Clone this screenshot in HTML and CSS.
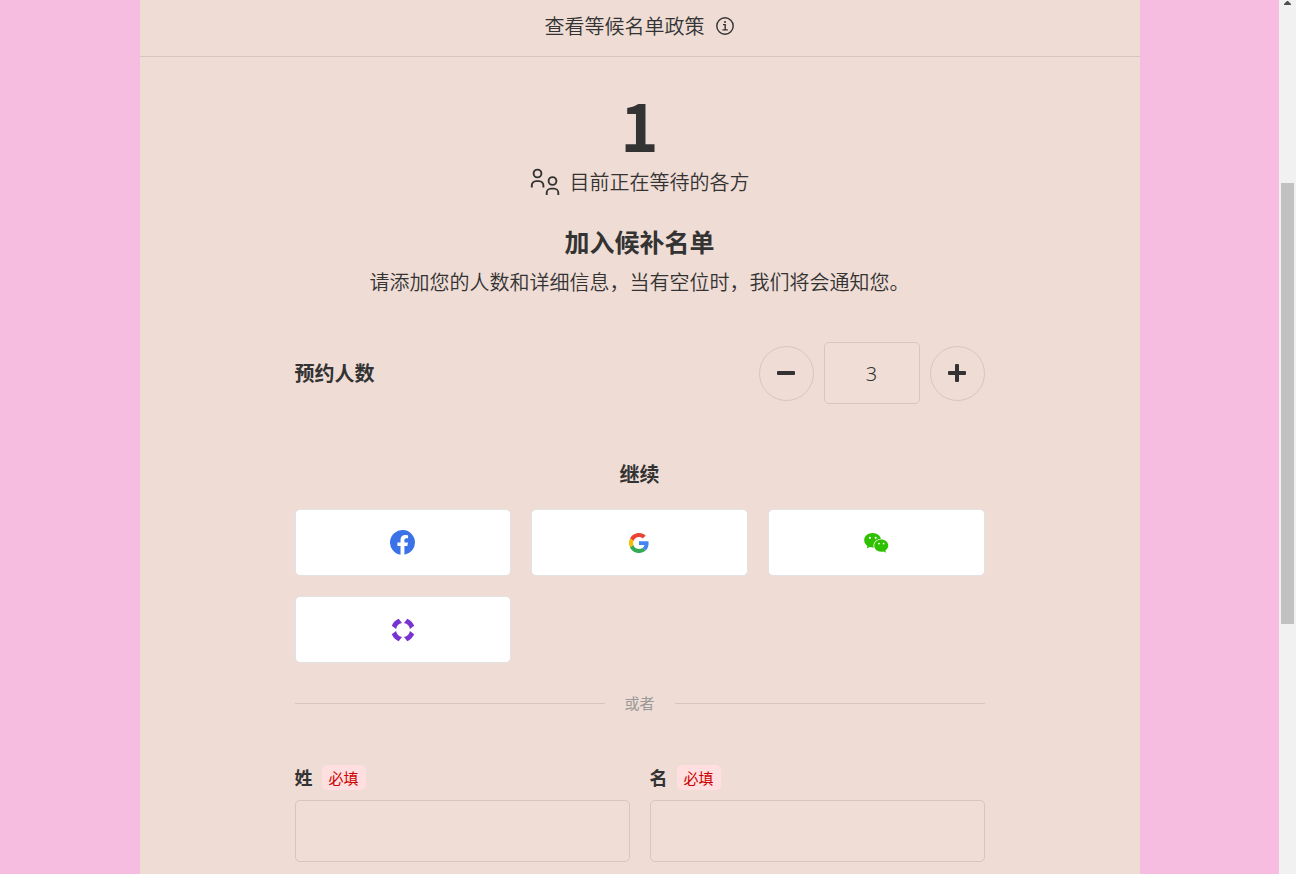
FILE: index.html
```html
<!DOCTYPE html>
<html lang="zh-CN">
<head>
  <meta charset="UTF-8" />
  <meta name="viewport" content="width=device-width, initial-scale=1.0" />
  <title>加入候补名单</title>
  <link rel="stylesheet" href="styles.css">
</head>
<body>

  <main class="page">
    <div class="card">

      <button type="button" class="policy">
        查看等候名单政策
        <svg width="20" height="20" viewBox="0 0 20 20" fill="none" stroke="currentColor" stroke-width="1.4" aria-hidden="true">
          <circle cx="10" cy="10" r="8.2" />
          <path d="M8 8.6h2.2v5.2M7.4 13.9h5.4" />
          <circle cx="10" cy="5.9" r="1" fill="currentColor" stroke="none" />
        </svg>
      </button>

      <div class="content">
        <div class="count">1</div>
        <p class="waiting">
          <svg width="30" height="28" viewBox="0 0 30 28" fill="none" stroke="currentColor" stroke-width="1.9" aria-hidden="true">
            <circle cx="7.5" cy="5.5" r="3.9" />
            <path d="M1.8 19.5v-2.2a4.2 4.2 0 0 1 4.2-4.2h3.2a4.2 4.2 0 0 1 4.2 4.2v2.2" />
            <circle cx="22.5" cy="13" r="3.9" />
            <path d="M16.7 27v-2.2a4.2 4.2 0 0 1 4.2-4.2h3.2a4.2 4.2 0 0 1 4.2 4.2V27" />
          </svg>
          目前正在等待的各方
        </p>

        <h1>加入候补名单</h1>
        <p class="intro">请添加您的人数和详细信息，当有空位时，我们将会通知您。</p>

        <form>
          <div class="party">
            <label for="partySize">预约人数</label>
            <div class="stepper">
              <button type="button" class="round" aria-label="减少">
                <svg width="20" height="20" viewBox="0 0 20 20" aria-hidden="true">
                  <rect x="1" y="8" width="18" height="4" rx="1" fill="currentColor" />
                </svg>
              </button>
              <input type="text" id="partySize" class="size" value="3" inputmode="numeric">
              <button type="button" class="round" aria-label="增加">
                <svg width="20" height="20" viewBox="0 0 20 20" aria-hidden="true">
                  <path d="M2 8h6V2q0-1 1-1h2q1 0 1 1v6h6q1 0 1 1v2q0 1-1 1h-6v6q0 1-1 1H9q-1 0-1-1v-6H2q-1 0-1-1V9q0-1 1-1z" fill="currentColor" />
                </svg>
              </button>
            </div>
          </div>

          <h2>继续</h2>
          <div class="logins">
            <button type="button" aria-label="Facebook">
              <svg width="25" height="25" viewBox="0 0 24 24" aria-hidden="true">
                <path fill="#3b72e8" d="M24 12a12 12 0 1 0-13.9 11.85v-8.4H7.1V12h3V9.4c0-3 1.8-4.7 4.55-4.7 1.3 0 2.7.25 2.7.25v2.9h-1.5c-1.5 0-2 .95-2 1.9V12h3.4l-.55 3.45h-2.85v8.4A12 12 0 0 0 24 12z" />
              </svg>
            </button>
            <button type="button" aria-label="Google">
              <svg width="20" height="20" viewBox="0 0 48 48" aria-hidden="true">
                <path fill="#ea4335" d="M24 9.5c3.54 0 6.71 1.22 9.21 3.6l6.85-6.85C35.9 2.38 30.47 0 24 0 14.62 0 6.51 5.38 2.56 13.22l7.98 6.19C12.43 13.72 17.74 9.5 24 9.5z" />
                <path fill="#4285f4" d="M46.98 24.55c0-1.57-.15-3.09-.38-4.55H24v9.02h12.94c-.58 2.96-2.26 5.48-4.78 7.18l7.73 6c4.51-4.18 7.09-10.36 7.09-17.65z" />
                <path fill="#fbbc05" d="M10.53 28.59a14.5 14.5 0 0 1 0-9.18l-7.98-6.19a24 24 0 0 0 0 21.56l7.98-6.19z" />
                <path fill="#34a853" d="M24 48c6.48 0 11.93-2.13 15.89-5.81l-7.73-6c-2.15 1.45-4.92 2.3-8.16 2.3-6.26 0-11.57-4.22-13.47-9.91l-7.98 6.19C6.51 42.62 14.62 48 24 48z" />
              </svg>
            </button>
            <button type="button" aria-label="微信">
              <svg width="25" height="20" viewBox="0 0 25 20" aria-hidden="true">
                <path fill="#2dc100" d="M8.6 0C3.9 0 .2 3.1.2 7.2c0 2.4 1.2 4.3 3.3 5.8l-.8 2.6 3-1.5c1 .2 2 .4 2.9.4C13.3 14.5 17 11.3 17 7.2S13.3 0 8.6 0z" />
                <ellipse cx="17.3" cy="12.6" rx="7.9" ry="6.9" fill="#fff" />
                <path fill="#2dc100" d="M17.3 6.4c-4 0-7.1 2.7-7.1 6.2s3.1 6.2 7.1 6.2c.8 0 1.6-.2 2.4-.4l2.3 1.3-.6-2.1c1.7-1.3 2.9-3 2.9-5 0-3.5-3.2-6.2-7-6.2z" />
                <g fill="#fff">
                  <circle cx="5.9" cy="4.8" r="1.1" />
                  <circle cx="11.7" cy="4.8" r="1.1" />
                  <circle cx="15" cy="10.6" r=".9" />
                  <circle cx="19.6" cy="10.6" r=".9" />
                </g>
              </svg>
            </button>
            <button type="button" aria-label="其他账号">
              <svg width="24" height="24" viewBox="0 0 24 24" aria-hidden="true">
                <defs>
                  <path id="segment" d="M16.3.8Q21 2.800 23.200 7.700L18.900 11A7.200 7.200 0 0 0 13 5.100z" />
                </defs>
                <g fill="#7933d1">
                  <use href="#segment" />
                  <use href="#segment" transform="rotate(90 12 12)" />
                  <use href="#segment" transform="rotate(180 12 12)" />
                  <use href="#segment" transform="rotate(270 12 12)" />
                </g>
              </svg>
            </button>
          </div>

          <div class="divider">或者</div>

          <div class="names">
            <div class="field">
              <label for="lastName">姓 <span class="required">必填</span></label>
              <input type="text" id="lastName">
            </div>
            <div class="field">
              <label for="firstName">名 <span class="required">必填</span></label>
              <input type="text" id="firstName">
            </div>
          </div>
        </form>
      </div>
    </div>
  </main>

  <div class="scrollbar" aria-hidden="true">
    <svg width="7" height="4" viewBox="0 0 7 4"><path d="M0 4V3l3-3h1l3 3v1z" fill="#505050" /></svg>
    <div class="thumb"></div>
  </div>

</body>
</html>
```

FILE: styles.css
```css
* {
  box-sizing: border-box;
}

body {
  margin: 0;
  height: 100vh;
  display: flex;
  overflow: hidden;
  background: #f7bde0;
  color: #333;
  font-family: "Noto Sans CJK SC", sans-serif;
  font-size: 20px;
  font-weight: 350;
  line-height: 30px;
}

h1, h2, p {
  margin: 0;
}

button, input {
  font: inherit;
  color: inherit;
}

button {
  display: flex;
  align-items: center;
  justify-content: center;
  padding: 0;
  cursor: pointer;
}

.page {
  flex: 1;
  min-width: 0;
  overflow: hidden;
}

.card {
  max-width: 1000px;
  min-height: 100%;
  margin: 0 auto;
  background: #efdcd5;
}

.policy {
  width: 100%;
  height: 57px;
  gap: 10px;
  padding-bottom: 4px;
  background: none;
  border: 0;
  border-bottom: 1px solid #d9c5bf;
}

.content {
  max-width: 690px;
  margin: 0 auto;
  padding-top: 30px;
  text-align: center;
}

.count {
  margin-bottom: 6px;
  font-size: 65px;
  font-weight: 700;
  line-height: 74px;
}

.waiting {
  display: flex;
  align-items: center;
  justify-content: center;
  gap: 10px;
}

h1 {
  margin-top: 26px;
  font-size: 25px;
  line-height: 36px;
}

.intro {
  margin-top: 8px;
}

.party {
  display: flex;
  align-items: center;
  justify-content: space-between;
  margin-top: 45px;
}

.party label {
  font-weight: 700;
}

.stepper {
  display: flex;
  align-items: center;
  gap: 10px;
}

.round {
  width: 55px;
  height: 55px;
  background: none;
  border: 1px solid #d9c5bf;
  border-radius: 50%;
}

.size, .field input {
  height: 62px;
  background: #efddd6;
  border: 1px solid #d9c5bf;
  border-radius: 5px;
}

.size {
  width: 96px;
  font-family: "Noto Sans", sans-serif;
  font-weight: 300;
  text-align: center;
}

h2 {
  margin-top: 55px;
  font-size: 20px;
  line-height: 30px;
}

.logins {
  display: grid;
  grid-template-columns: repeat(3, 1fr);
  gap: 20px;
  margin-top: 20px;
}

.logins button {
  height: 67px;
  background: #fff;
  border: 1px solid #e2e2e2;
  border-radius: 5px;
}

.divider {
  display: flex;
  align-items: center;
  gap: 20px;
  margin-top: 30px;
  color: #999;
  font-size: 15px;
  font-weight: 400;
  line-height: 20px;
}

.divider::before, .divider::after {
  content: "";
  flex: 1;
  height: 1px;
  background: #d9c5bf;
}

.names {
  display: grid;
  grid-template-columns: 1fr 1fr;
  gap: 20px;
  margin-top: 52px;
}

.field label {
  display: flex;
  align-items: center;
  gap: 9px;
  margin-bottom: 10px;
  font-size: 18px;
  font-weight: 700;
  line-height: 25px;
}

.field input {
  display: block;
  width: 100%;
}

.required {
  padding: 0 7px;
  background: #ffdfdf;
  border-radius: 5px;
  color: #cc0000;
  font-size: 15px;
  font-weight: 400;
}

.scrollbar {
  display: flex;
  flex-direction: column;
  align-items: center;
  width: 17px;
  padding: 1px 2px 250px;
  background: #f1f1f1;
}

.thumb {
  flex: 1;
  width: 13px;
  margin-top: 178px;
  background: #c1c1c1;
}
```
